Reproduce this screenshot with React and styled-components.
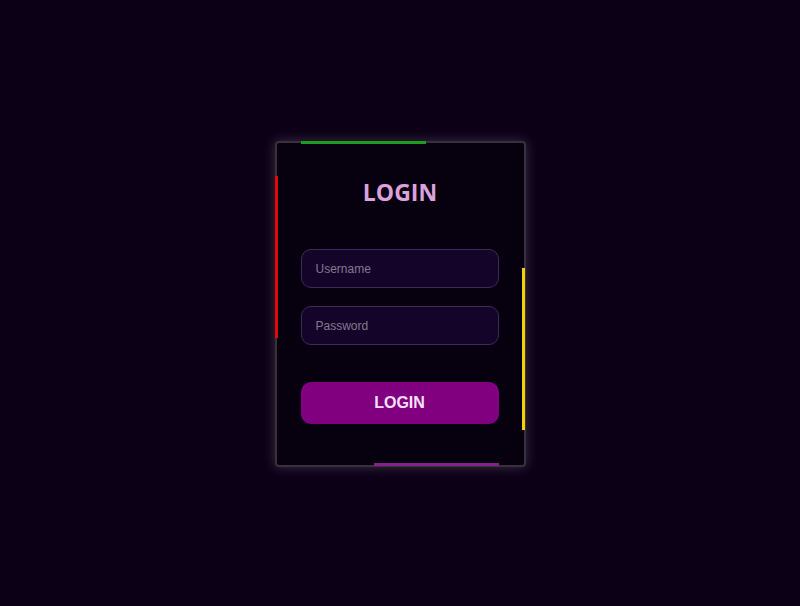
import styled, { createGlobalStyle, css } from 'styled-components';

const GlobalStyle = createGlobalStyle`
  * {
    box-sizing: border-box;
  }
  html, body {
    margin: 0;
    height: 100%;
    background: #0c0017;
  }
  #root {
    height: 100%;
  }
`;

const App = () => {
  return (
    <>
      <GlobalStyle />
      <Page>
        <Card>
          <Glow side="top" color="#1e9e1e" />
          <Glow side="left" color="#e00a0a" />
          <Glow side="right" color="#f5d000" />
          <Glow side="bottom" color="#86208a" />
          <Title>LOGIN</Title>
          <Form onSubmit={e => e.preventDefault()}>
            <Input type="text" placeholder="Username" />
            <Input type="password" placeholder="Password" />
            <Button type="submit">LOGIN</Button>
          </Form>
        </Card>
      </Page>
    </>
  );
};

// decorative border segments sitting over the card's edge
const sideMapper = {
  top: css`
    top: -2px;
    left: 24px;
    width: 125px;
    height: 3px;
  `,
  left: css`
    top: 33px;
    left: -2px;
    width: 3px;
    height: 162px;
  `,
  right: css`
    top: 125px;
    right: -1px;
    width: 3px;
    height: 162px;
  `,
  bottom: css`
    bottom: -1px;
    left: 97px;
    width: 125px;
    height: 3px;
  `,
};

const Page = styled.div`
  display: flex;
  align-items: center;
  justify-content: center;
  height: 100%;
  padding-top: 2px;
`;

const Card = styled.div`
  position: relative;
  width: 251px;
  height: 326px;
  padding: 33px 24px 0;
  background: #07000e;
  border: 2px solid #36313c;
  border-radius: 4px;
  box-shadow: 0 0 12px rgba(200, 190, 210, 0.25);
`;

const Glow = styled.span`
  position: absolute;
  background: ${({ color }) => color};
  ${({ side }) => sideMapper[side]}
`;

const Title = styled.h2`
  margin: 0;
  font-family: 'Open Sans', 'Noto Sans', sans-serif;
  font-size: 23px;
  font-weight: 700;
  line-height: 32px;
  text-align: center;
  color: #dba2de;
`;

const Form = styled.form`
  display: flex;
  flex-direction: column;
  gap: 18px;
  margin-top: 41px;
`;

const Input = styled.input`
  width: 198px;
  height: 39px;
  padding: 0 14px;
  font-family: 'Liberation Sans', Arial, sans-serif;
  font-size: 12px;
  color: #d8c8e0;
  background: #15042a;
  border: 1.5px solid #3f2a56;
  border-radius: 10px;
  outline: none;
  &::placeholder {
    color: #85788f;
  }
`;

const Button = styled.button`
  width: 198px;
  height: 42px;
  margin-top: 19px;
  font-family: 'Liberation Sans', Arial, sans-serif;
  font-size: 16px;
  font-weight: 700;
  color: #fbe0fb;
  background: #800080;
  border: none;
  border-radius: 10px;
  cursor: pointer;
`;

export default App;
